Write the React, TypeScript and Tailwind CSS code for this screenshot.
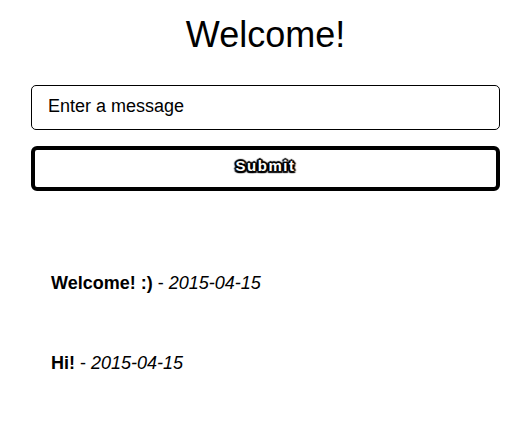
import { useState } from "react"

const messages = [
  { text: "Welcome! :)", date: "2015-04-15" },
  { text: "Hi!", date: "2015-04-15" },
]

export default function App() {
  const [value, setValue] = useState("")

  return (
    <div className="min-h-[435px] w-full bg-white text-black font-['Liberation_Sans',Arial,sans-serif]">
      <div className="px-[31px] pt-[15px]">
        <h1 className="text-center text-[36px] leading-[40px] font-normal">
          Welcome!
        </h1>

        <form
          className="mt-[30px] flex flex-col gap-[16px]"
          onSubmit={(e) => e.preventDefault()}
        >
          <input
            value={value}
            onChange={(e) => setValue(e.target.value)}
            placeholder="Enter a message"
            className="h-[45px] w-full rounded-[5px] border border-black px-4 pb-[3px] text-[18px] leading-[24px] placeholder:text-black outline-none"
          />
          <button
            type="submit"
            className="h-[45px] w-full rounded-[6px] border-4 border-black bg-white pb-[6px] text-[15px] font-bold leading-[20px] tracking-[1.5px] text-white [text-shadow:2px_0_1px_#000,-2px_0_1px_#000,0_2px_1px_#000,0_-2px_1px_#000,1.5px_1.5px_1px_#000,-1.5px_-1.5px_1px_#000,1.5px_-1.5px_1px_#000,-1.5px_1.5px_1px_#000]"
          >
            Submit
          </button>
        </form>

        <ul className="mt-[80px] flex flex-col gap-[56px] pl-[20px]">
          {messages.map((m, i) => (
            <li key={i} className="text-[18px] leading-[24px]">
              <span className="font-bold">{m.text}</span>
              {" - "}
              <span className="italic">{m.date}</span>
            </li>
          ))}
        </ul>
      </div>
    </div>
  )
}
